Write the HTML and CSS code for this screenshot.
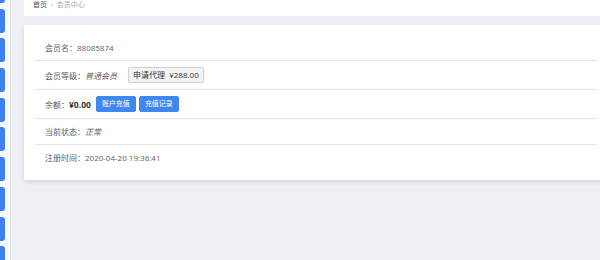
FILE: index.html
```html
<!DOCTYPE html>
<html lang="zh-CN">
<head>
    <meta charset="UTF-8">
    <title>会员中心</title>
    <link rel="stylesheet" href="styles.css">
</head>
<body>
    <div class="sidebar">
        <div class="tabs">
            <span></span><span></span><span></span><span></span><span></span>
            <span></span><span></span><span></span><span></span><span></span>
        </div>
    </div>

    <div class="main">
        <div class="crumbs">
            <span class="home">首页</span>
            <span class="sep">›</span>
            <span class="current">会员中心</span>
        </div>

        <div class="card">
            <div class="row">
                <span class="label">会员名：</span><span class="value">88085874</span>
            </div>
            <div class="row">
                <span class="label">会员等级：</span><em class="value">普通会员</em>
                <button class="btn btn-default">申请代理&nbsp; ¥288.00</button>
            </div>
            <div class="row">
                <span class="label">余额：</span><strong class="money">¥0.00</strong>
                <button class="btn btn-blue">账户充值</button>
                <button class="btn btn-blue">充值记录</button>
            </div>
            <div class="row">
                <span class="label">当前状态：</span><em class="value">正常</em>
            </div>
            <div class="row">
                <span class="label">注册时间：</span><span class="value">2020-04-20 19:36:41</span>
            </div>
        </div>
    </div>
</body>
</html>
```

FILE: styles.css
```css
html, body {
    margin: 0;
    height: 100%;
}
body {
    display: flex;
    overflow: hidden;
    background-color: #eef0f4;
    font-family: "Open Sans", "Noto Sans CJK SC", sans-serif;
    color: #666;
}

/* left edge of the side menu */
.sidebar {
    width: 10px;
    flex: none;
    background-color: #f6f7f9;
    border-right: 1px solid #dfe2e7;
    overflow: hidden;
}
.sidebar .tabs {
    display: flex;
    flex-direction: column;
    gap: 5.7px;
    margin-top: -21px;
}
.sidebar .tabs span {
    display: block;
    width: 5px;
    height: 24px;
    background-color: #3f7ff2;
    border-radius: 0 3px 3px 0;
}

.main {
    flex: 1;
    padding-left: 13px;
    margin-right: -8px;
}

.crumbs {
    height: 16px;
    background-color: #fff;
    padding-left: 9px;
    font-size: 7px;
    line-height: 10px;
    color: #aaa;
}
.crumbs .home {
    color: #555;
}
.crumbs .sep {
    margin: 0 2px;
}

.card {
    margin-top: 9px;
    background-color: #fff;
    padding: 10px 11px;
    box-shadow: 0 2px 5px rgba(0, 0, 0, 0.12);
}
.row {
    display: flex;
    align-items: center;
    min-height: 13px;
    padding: 6px 10px;
    font-size: 8px;
    line-height: 13px;
    color: #606060;
    border-bottom: 1px solid #e4e4e4;
}
.row:last-child {
    border-bottom: none;
}
.row em {
    font-style: italic;
}
.row .money {
    color: #333;
    font-size: 8.5px;
    margin-right: 2px;
}

.btn {
    height: 16px;
    padding: 0 5px;
    margin-left: 3px;
    font-family: inherit;
    line-height: 14px;
    border-radius: 2px;
    cursor: pointer;
}
.btn-default {
    margin-left: 11px;
    padding: 0 4px;
    font-size: 8px;
    color: #333;
    background-color: #f3f3f3;
    border: 1px solid #cfcfcf;
}
.btn-blue {
    width: 40px;
    padding: 0;
    font-size: 7px;
    color: #fff;
    background-color: #3f86f0;
    border: 1px solid #3f86f0;
}
```
